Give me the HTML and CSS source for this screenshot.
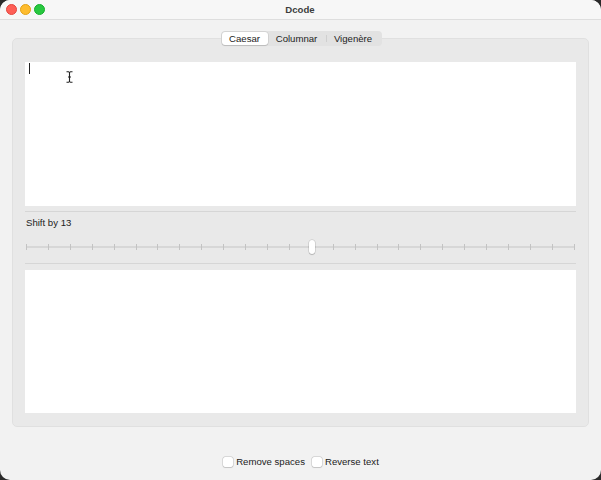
FILE: index.html
```html
<!DOCTYPE html>
<html>
<head>
<meta charset="utf-8">
<title>Dcode</title>
<link rel="stylesheet" href="styles.css">
</head>
<body>
<div class="window">
  <div class="titlebar">
    <div class="lights">
      <span class="light red"></span>
      <span class="light yellow"></span>
      <span class="light green"></span>
    </div>
    <div class="title">Dcode</div>
  </div>
  <div class="content">
    <div class="segmented">
      <span class="seg active">Caesar</span>
      <span class="seg">Columnar</span>
      <span class="seg sep">Vigenère</span>
    </div>
    <div class="tabbox">
      <div class="textarea first">
        <span class="caret"></span>
        <svg class="ibeam" width="7" height="12" viewBox="0 0 7 12">
          <path d="M0.5 0.7 H2.5 L3.5 1.6 L4.5 0.7 H6.5 M3.5 1.6 V10.4 M0.5 11.3 H2.5 L3.5 10.4 L4.5 11.3 H6.5 M2 6 H5" fill="none" stroke="#222" stroke-width="1.1"/>
        </svg>
      </div>
      <div class="sep-line top"></div>
      <div class="label">Shift by 13</div>
      <div class="slider">
        <div class="track"></div>
        <div class="ticks">
          <i></i><i></i><i></i><i></i><i></i><i></i><i></i><i></i><i></i><i></i><i></i><i></i><i></i>
          <i></i><i></i><i></i><i></i><i></i><i></i><i></i><i></i><i></i><i></i><i></i><i></i><i></i>
        </div>
        <div class="thumb" style="left: 52%"></div>
      </div>
      <div class="sep-line bottom"></div>
      <div class="textarea second"></div>
    </div>
    <div class="options">
      <label class="check"><span class="box"></span>Remove spaces</label>
      <label class="check"><span class="box"></span>Reverse text</label>
    </div>
  </div>
</div>
</body>
</html>
```
FILE: styles.css
```css
* { box-sizing: border-box; }
html, body {
  margin: 0;
  padding: 0;
  background: #2a2a2a;
  font-family: "Liberation Sans", Arial, sans-serif;
}
.window {
  width: 601px;
  height: 480px;
  background: #f2f2f2;
  border-radius: 10px;
  overflow: hidden;
  display: flex;
  flex-direction: column;
}
.titlebar {
  height: 20px;
  background: #f7f7f7;
  border-bottom: 1px solid #dedede;
  display: flex;
  align-items: center;
  position: relative;
}
.lights {
  display: flex;
  gap: 3px;
  padding-left: 6px;
}
.light {
  width: 11px;
  height: 11px;
  border-radius: 50%;
  display: block;
}
.red { background: #fe5f57; border: 0.5px solid #e2463f; }
.yellow { background: #febc2e; border: 0.5px solid #e1a116; }
.green { background: #28c840; border: 0.5px solid #14ae2a; }
.title {
  flex: 1;
  text-align: center;
  font-size: 9.6px;
  font-weight: 700;
  color: #3d3d3d;
  margin-right: 46px;
}
.content {
  flex: 1;
  display: flex;
  flex-direction: column;
  padding: 11px 12px 0 12px;
}
.segmented {
  align-self: center;
  display: flex;
  height: 15px;
  background: #e2e2e2;
  border-radius: 4px;
  padding: 1px;
  margin-left: 1px;
  margin-bottom: -8px;
  position: relative;
  z-index: 2;
  font-size: 9.6px;
  color: #222;
}
.seg {
  display: flex;
  align-items: center;
  justify-content: center;
  height: 13px;
}
.seg:nth-child(1) { width: 46px; }
.seg:nth-child(2) { width: 58px; }
.seg:nth-child(3) { width: 55px; }
.seg.active {
  background: #ffffff;
  border-radius: 3px;
  box-shadow: 0 0 0 0.5px rgba(0,0,0,0.12), 0 1px 1px rgba(0,0,0,0.12);
}
.seg.sep {
  position: relative;
}
.seg.sep::before {
  content: "";
  position: absolute;
  left: 0;
  top: 3px;
  width: 1px;
  height: 7px;
  background: #cfcfcf;
}
.tabbox {
  background: #e9e9e9;
  border: 1px solid #e0e0e0;
  border-radius: 5px;
  padding: 23px 12px 12px 12px;
  height: 389px;
  display: flex;
  flex-direction: column;
}
.textarea {
  background: #ffffff;
  position: relative;
}
.textarea.first { height: 144px; }
.textarea.second { height: 143px; margin-top: 6px; }
.caret {
  position: absolute;
  left: 4px;
  top: 1px;
  width: 1px;
  height: 11px;
  background: #222;
}
.ibeam {
  position: absolute;
  left: 41px;
  top: 9px;
}
.sep-line {
  height: 1px;
  background: #d6d6d6;
}
.sep-line.top { margin-top: 5px; }
.sep-line.bottom { margin-top: 6px; }
.label {
  font-size: 9.6px;
  color: #222;
  line-height: 12px;
  margin-top: 5px;
  padding-left: 1px;
}
.slider {
  position: relative;
  height: 20px;
  margin-top: 8px;
}
.track {
  position: absolute;
  left: 1px;
  right: 1px;
  top: 9px;
  height: 2px;
  background: #d7d7d7;
  border-radius: 1px;
}
.ticks {
  position: absolute;
  left: 1px;
  right: 1px;
  top: 7px;
  height: 6px;
  display: flex;
  justify-content: space-between;
}
.ticks i {
  width: 1px;
  height: 6px;
  background: #c3c3c3;
  display: block;
}
.thumb {
  position: absolute;
  top: 3px;
  width: 6px;
  height: 14px;
  margin-left: -3px;
  background: #ffffff;
  border-radius: 3px;
  box-shadow: 0 0 0 0.5px rgba(0,0,0,0.18), 0 1px 1px rgba(0,0,0,0.15);
}
.options {
  display: flex;
  justify-content: center;
  gap: 7px;
  margin-top: 29px;
  margin-left: 1px;
  font-size: 9.6px;
  color: #222;
}
.check {
  display: flex;
  align-items: center;
  gap: 3px;
}
.box {
  width: 10px;
  height: 10px;
  background: #fff;
  border-radius: 2px;
  box-shadow: 0 0 0 0.5px rgba(0,0,0,0.2), 0 0.5px 1px rgba(0,0,0,0.1);
}
```
